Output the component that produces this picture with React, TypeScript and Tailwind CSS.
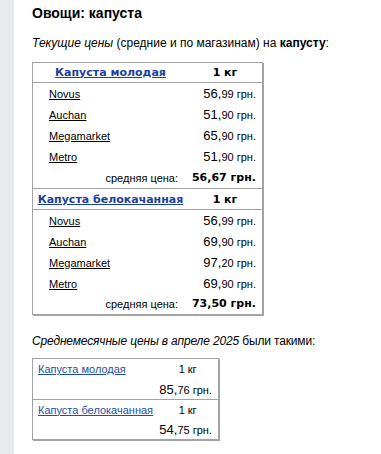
import React from 'react'

type Store = { name: string; whole: string; frac: string }

type Group = { title: string; unit: string; stores: Store[]; avg: string }

const groups: Group[] = [
  {
    title: 'Капуста молодая',
    unit: '1 кг',
    stores: [
      { name: 'Novus', whole: '56', frac: '99' },
      { name: 'Auchan', whole: '51', frac: '90' },
      { name: 'Megamarket', whole: '65', frac: '90' },
      { name: 'Metro', whole: '51', frac: '90' },
    ],
    avg: '56,67 грн.',
  },
  {
    title: 'Капуста белокачанная',
    unit: '1 кг',
    stores: [
      { name: 'Novus', whole: '56', frac: '99' },
      { name: 'Auchan', whole: '69', frac: '90' },
      { name: 'Megamarket', whole: '97', frac: '20' },
      { name: 'Metro', whole: '69', frac: '90' },
    ],
    avg: '73,50 грн.',
  },
]

const monthly = [
  { title: 'Капуста молодая', unit: '1 кг', whole: '85', frac: '76' },
  { title: 'Капуста белокачанная', unit: '1 кг', whole: '54', frac: '75' },
]

const arial = "font-['Liberation_Sans',Arial,sans-serif]"
const verdana = "font-['DejaVu_Sans',Verdana,sans-serif]"

function Price({ whole, frac }: { whole: string; frac: string }) {
  return (
    <span className="whitespace-nowrap">
      <span className="text-[13px]">{whole},</span>
      <span className="text-[11px]">{frac} грн.</span>
    </span>
  )
}

export default function App() {
  return (
    <div className={`flex min-h-[454px] bg-white text-black ${arial}`}>
      <div className="w-[14px] shrink-0 bg-[#e9eaee]" />
      <div className="pl-[18px] pt-[2px]">
        <h1 className="text-[14px] font-bold leading-[22px]">Овощи: капуста</h1>

        <p className="mt-[11px] text-[12px] leading-[16px]">
          <i>Текущие цены</i> (средние и по магазинам) на <b>капусту</b>:
        </p>

        {/* shop prices, grouped by kind of cabbage */}
        <table className="mt-[11px] w-[231px] border-separate border-spacing-0 border border-[#a3a3a3] shadow-[1px_1px_0_#a3a3a3]">
          {groups.map((g, gi) => (
            <tbody key={g.title}>
              <tr className={gi > 0 ? 'h-[22px]' : 'h-[20px]'}>
                <td
                  className={`border-b border-[#a3a3a3] text-center text-[11px] leading-[14px] font-bold ${verdana} ${gi > 0 ? 'border-t pt-[2px]' : ''}`}
                >
                  <a href="#" className="text-[#1b3f9e] underline">
                    {g.title}
                  </a>
                </td>
                <td
                  className={`w-[74px] border-b border-[#a3a3a3] text-center text-[11px] leading-[14px] font-bold ${verdana} ${gi > 0 ? 'border-t pt-[2px]' : ''}`}
                >
                  {g.unit}
                </td>
              </tr>
              {g.stores.map((s) => (
                <tr key={s.name} className="h-[21px]">
                  <td className="pl-[16px] text-[11px] leading-[14px]">
                    <a href="#" className="underline">
                      {s.name}
                    </a>
                  </td>
                  <td className="pr-[6px] text-right leading-[14px]">
                    <Price whole={s.whole} frac={s.frac} />
                  </td>
                </tr>
              ))}
              <tr className={gi > 0 ? 'h-[20px]' : 'h-[21px]'}>
                <td className="pr-[10px] text-right text-[11px] leading-[14px]">средняя цена:</td>
                <td className={`pr-[6px] text-right text-[11px] leading-[14px] font-bold whitespace-nowrap ${verdana}`}>
                  {g.avg}
                </td>
              </tr>
            </tbody>
          ))}
        </table>

        <p className="mt-[18px] text-[12px] leading-[16px] tracking-[-0.15px]">
          <i>Среднемесячные цены в апреле 2025</i> были такими:
        </p>

        <table className="mt-[9px] w-[187px] border-separate border-spacing-0 border border-[#a3a3a3] shadow-[1px_1px_0_#a3a3a3]">
          {monthly.map((m, mi) => (
            <tbody key={m.title}>
              <tr className="h-[20px]">
                <td className={`pl-[5px] text-[11px] leading-[14px] ${mi > 0 ? 'border-t border-[#a3a3a3]' : ''}`}>
                  <a href="#" className="text-[#1f4fa8] underline">
                    {m.title}
                  </a>
                </td>
                <td className={`text-center text-[11px] leading-[14px] ${mi > 0 ? 'border-t border-[#a3a3a3]' : ''}`}>
                  {m.unit}
                </td>
              </tr>
              <tr className="h-[20px]">
                <td />
                <td className="pr-[6px] text-right leading-[14px]">
                  <Price whole={m.whole} frac={m.frac} />
                </td>
              </tr>
            </tbody>
          ))}
        </table>
      </div>
    </div>
  )
}
